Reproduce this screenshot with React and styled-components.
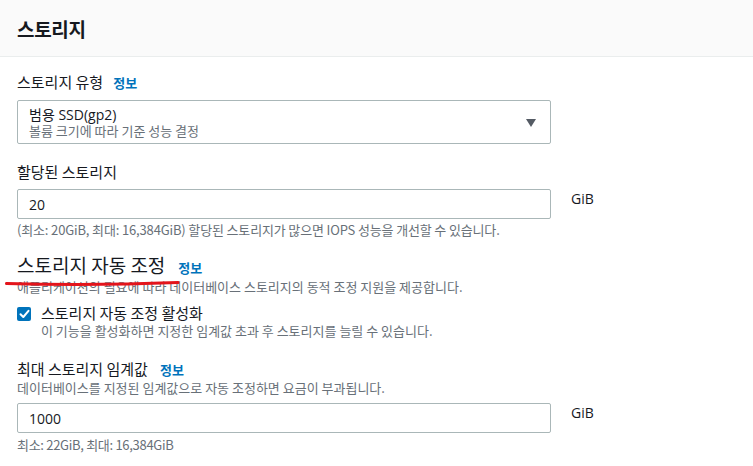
import React from "react";
import styled, { createGlobalStyle } from "styled-components";

const KR = `"Noto Sans CJK KR", "Open Sans", sans-serif`;
const LATIN = `"Open Sans", "Noto Sans CJK KR", sans-serif`;

const Global = createGlobalStyle`
  html, body { margin: 0; padding: 0; background: #ffffff; }
  body {
    font-family: ${KR};
    color: #16191f;
    -webkit-font-smoothing: antialiased;
  }
`;

const Page = styled.div`
  position: relative;
  width: 753px;
  min-height: 466px;
  background: #fff;
  overflow: hidden;
`;

const Header = styled.header`
  height: 56px;
  background: #fafafa;
  border-bottom: 1px solid #eaeded;
  display: flex;
  align-items: center;
  padding: 0 17px;
`;

const Title = styled.h2`
  margin: 0;
  font-size: 19px;
  font-weight: 700;
  letter-spacing: -0.3px;
  color: #16191f;
`;

const Body = styled.div`
  padding: 15px 17px 0;
  display: flex;
  flex-direction: column;
`;

const Field = styled.div`
  display: flex;
  flex-direction: column;
  margin-top: ${(p) => p.$mt || 0}px;
`;

const Label = styled.div`
  display: flex;
  align-items: baseline;
  gap: ${(p) => p.$gap ?? 10}px;
  font-size: 15px;
  line-height: 20px;
  color: #16191f;
  margin-bottom: ${(p) => p.$mb ?? 7}px;
`;

const Info = styled.a`
  font-size: 13px;
  font-weight: 700;
  color: #0073bb;
  text-decoration: none;
`;

const Desc = styled.div`
  font-size: 13px;
  line-height: 16px;
  color: #687078;
  letter-spacing: ${(p) => p.$ls || 0}px;
  margin-top: ${(p) => p.$mt || 0}px;
  margin-bottom: ${(p) => p.$mb || 0}px;
`;

const SelectBox = styled.div`
  width: 534px;
  height: 44px;
  box-sizing: border-box;
  border: 1px solid #aab7b8;
  border-radius: 2px;
  display: flex;
  align-items: center;
  justify-content: space-between;
  padding: 0 14px 0 11px;
`;

const SelectText = styled.div`
  display: flex;
  flex-direction: column;
`;

const SelectValue = styled.div`
  font-family: ${LATIN};
  font-size: 14px;
  line-height: 17px;
  color: #16191f;
`;

const SelectSub = styled.div`
  font-size: 13px;
  line-height: 15px;
  color: #687078;
`;

const Caret = styled.span`
  width: 0;
  height: 0;
  margin-top: 1px;
  border-left: 5px solid transparent;
  border-right: 5px solid transparent;
  border-top: 8px solid #545b64;
`;

const InputRow = styled.div`
  display: flex;
  align-items: flex-start;
  gap: 20px;
`;

const Input = styled.div`
  width: 534px;
  height: 30px;
  box-sizing: border-box;
  border: 1px solid #aab7b8;
  border-radius: 2px;
  display: flex;
  align-items: center;
  padding: 0 11px;
  font-family: ${LATIN};
  font-size: 14px;
  color: #16191f;
`;

const Unit = styled.span`
  font-family: ${LATIN};
  font-size: 14px;
  line-height: 20px;
  color: #16191f;
`;

const SectionHead = styled.div`
  display: flex;
  align-items: baseline;
  gap: 13px;
  margin-top: ${(p) => p.$mt || 0}px;
`;

const SectionTitle = styled.h3`
  margin: 0;
  font-size: 19px;
  font-weight: 400;
  line-height: 24px;
  color: #16191f;
`;

const CheckRow = styled.div`
  display: flex;
  align-items: flex-start;
  gap: 10px;
  margin-top: ${(p) => p.$mt || 0}px;
`;

const Box = styled.span`
  width: 14px;
  height: 14px;
  margin-top: 4px;
  border-radius: 2px;
  background: #0073bb;
  display: flex;
  align-items: center;
  justify-content: center;
  flex: none;
`;

const CheckText = styled.div`
  display: flex;
  flex-direction: column;
`;

const CheckLabel = styled.div`
  font-size: 15px;
  line-height: 20px;
  color: #16191f;
`;

const OverlayWrap = styled.div`
  position: absolute;
  left: 0;
  top: 0;
  width: 753px;
  height: 466px;
  pointer-events: none;
`;

function AnnotationLayer() {
  return (
    <OverlayWrap>
      <svg width="753" height="466">
        <path d="M6.5 283.5 Q 90 286 178 282.5" fill="none" stroke="#e3141b" strokeWidth="3" strokeLinecap="round" />
      </svg>
    </OverlayWrap>
  );
}

export default function App() {
  return (
    <Page>
      <Global />
      <Header>
        <Title>스토리지</Title>
      </Header>
      <Body>
        <Field>
          <Label>
            스토리지 유형 <Info>정보</Info>
          </Label>
          <SelectBox>
            <SelectText>
              <SelectValue>범용 SSD(gp2)</SelectValue>
              <SelectSub>볼륨 크기에 따라 기준 성능 결정</SelectSub>
            </SelectText>
            <Caret />
          </SelectBox>
        </Field>

        <Field $mt={18}>
          <Label>할당된 스토리지</Label>
          <InputRow>
            <Input>20</Input>
            <Unit>GiB</Unit>
          </InputRow>
          <Desc $mt={3} $ls={-0.15}>
            (최소: 20GiB, 최대: 16,384GiB) 할당된 스토리지가 많으면 IOPS 성능을 개선할 수 있습니다.
          </Desc>
        </Field>

        <SectionHead $mt={15}>
          <SectionTitle>스토리지 자동 조정</SectionTitle>
          <Info>정보</Info>
        </SectionHead>
        <Desc $mt={2}>애플리케이션의 필요에 따라 데이터베이스 스토리지의 동적 조정 지원을 제공합니다.</Desc>

        <CheckRow $mt={8}>
          <Box>
            <svg width="11" height="10" viewBox="0 0 11 10">
              <path d="M1.5 5.2 L4.3 8 L9.5 1.8" fill="none" stroke="#fff" strokeWidth="2" strokeLinecap="round" strokeLinejoin="round" />
            </svg>
          </Box>
          <CheckText>
            <CheckLabel>스토리지 자동 조정 활성화</CheckLabel>
            <Desc>이 기능을 활성화하면 지정한 임계값 초과 후 스토리지를 늘릴 수 있습니다.</Desc>
          </CheckText>
        </CheckRow>

        <Field $mt={20}>
          <Label $mb={0} $gap={12}>
            최대 스토리지 임계값 <Info>정보</Info>
          </Label>
          <Desc $mb={7}>데이터베이스를 지정된 임계값으로 자동 조정하면 요금이 부과됩니다.</Desc>
          <InputRow>
            <Input>1000</Input>
            <Unit>GiB</Unit>
          </InputRow>
          <Desc $mt={4} $ls={-0.3}>최소: 22GiB, 최대: 16,384GiB</Desc>
        </Field>
      </Body>
      <AnnotationLayer />
    </Page>
  );
}
